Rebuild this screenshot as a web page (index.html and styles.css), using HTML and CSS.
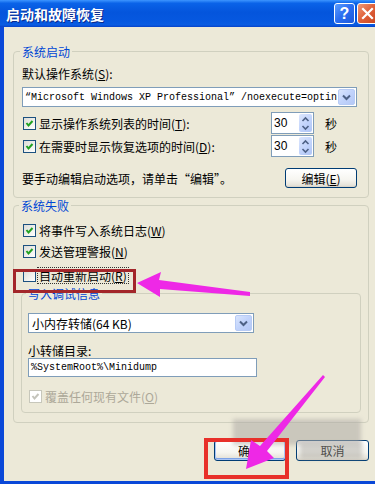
FILE: index.html
```html
<!DOCTYPE html>
<html lang="zh-CN">
<head>
<meta charset="utf-8">
<title>启动和故障恢复</title>
<link rel="stylesheet" href="styles.css">
</head>
<body>
<div class="window">
  <div class="titlebar">
    <span class="title">启动和故障恢复</span>
    <div class="tb-buttons">
      <span class="tb-btn help">?</span>
      <span class="tb-btn close"><svg width="19" height="19" viewBox="0 0 19 19"><path d="M5 5 L14 14 M14 5 L5 14" stroke="#fff" stroke-width="2.2" stroke-linecap="square"/></svg></span>
    </div>
  </div>
  <div class="client">
    <fieldset class="group g1">
      <legend>系统启动</legend>
      <div class="label">默认操作系统(<u>S</u>):</div>
      <div class="combo combo-os">
        <span class="combo-text mono">“Microsoft Windows XP Professional” /noexecute=optin</span>
        <span class="combo-btn"><svg width="9" height="7" viewBox="0 0 9 7"><path d="M1 1.5 L4.5 5 L8 1.5" fill="none" stroke="#4D6185" stroke-width="2"/></svg></span>
      </div>
      <div class="spin-row">
        <span class="cb"><svg width="11" height="11" viewBox="0 0 11 11"><path d="M2.5 5 L4.5 7.5 L8.5 3" fill="none" stroke="#21A121" stroke-width="2"/></svg></span>
        <span class="cb-label">显示操作系统列表的时间(<u>T</u>):</span>
        <span class="spin"><span class="spin-val">30</span><span class="spin-btn"><svg width="13" height="19" viewBox="0 0 13 19"><path d="M3.5 7 L6.5 4 L9.5 7 M3.5 12 L6.5 15 L9.5 12" fill="none" stroke="#4D6185" stroke-width="1.6"/></svg></span></span>
        <span class="unit">秒</span>
      </div>
      <div class="spin-row second">
        <span class="cb"><svg width="11" height="11" viewBox="0 0 11 11"><path d="M2.5 5 L4.5 7.5 L8.5 3" fill="none" stroke="#21A121" stroke-width="2"/></svg></span>
        <span class="cb-label">在需要时显示恢复选项的时间(<u>D</u>):</span>
        <span class="spin"><span class="spin-val">30</span><span class="spin-btn"><svg width="13" height="19" viewBox="0 0 13 19"><path d="M3.5 7 L6.5 4 L9.5 7 M3.5 12 L6.5 15 L9.5 12" fill="none" stroke="#4D6185" stroke-width="1.6"/></svg></span></span>
        <span class="unit">秒</span>
      </div>
      <div class="edit-row">
        <span>要手动编辑启动选项，请单击“编辑”。</span>
        <button class="btn btn-edit" type="button">编辑(<u>E</u>)</button>
      </div>
    </fieldset>

    <fieldset class="group g2">
      <legend>系统失败</legend>
      <div class="cb-row first">
        <span class="cb"><svg width="11" height="11" viewBox="0 0 11 11"><path d="M2.5 5 L4.5 7.5 L8.5 3" fill="none" stroke="#21A121" stroke-width="2"/></svg></span>
        <span class="cb-label">将事件写入系统日志(<u>W</u>)</span>
      </div>
      <div class="cb-row">
        <span class="cb"><svg width="11" height="11" viewBox="0 0 11 11"><path d="M2.5 5 L4.5 7.5 L8.5 3" fill="none" stroke="#21A121" stroke-width="2"/></svg></span>
        <span class="cb-label">发送管理警报(<u>N</u>)</span>
      </div>
      <div class="cb-row restart">
        <span class="cb"></span>
        <span class="cb-label focus">自动重新启动(<u>R</u>)</span>
      </div>

      <fieldset class="group g3">
        <legend>写入调试信息</legend>
        <div class="combo combo-dump">
          <span class="combo-text">小内存转储(64 KB)</span>
          <span class="combo-btn"><svg width="9" height="7" viewBox="0 0 9 7"><path d="M1 1.5 L4.5 5 L8 1.5" fill="none" stroke="#4D6185" stroke-width="2"/></svg></span>
        </div>
        <div class="label dir-label">小转储目录:</div>
        <div class="textbox mono">%SystemRoot%\Minidump</div>
        <div class="cb-row disabled">
          <span class="cb"><svg width="11" height="11" viewBox="0 0 11 11"><path d="M2.5 5 L4.5 7.5 L8.5 3" fill="none" stroke="#C4C4BB" stroke-width="2"/></svg></span>
          <span class="cb-label">覆盖任何现有文件(<u>O</u>)</span>
        </div>
      </fieldset>
    </fieldset>

    <div class="dlg-buttons">
      <button class="btn btn-ok" type="button">确定</button>
      <button class="btn btn-cancel" type="button">取消</button>
    </div>
  </div>

  <div class="mark red-box-1"></div>
  <div class="mark blur-1"></div>
  <div class="mark blur-2"></div>
  <div class="mark red-box-2"></div>
  <svg class="arrows" width="375" height="484" viewBox="0 0 375 484">
    <polygon points="137,283 161,272 159,280 250,292 250,296 160,289 160,297" fill="#EE28E6"/>
    <polygon points="323,375 325,377 267,451 274,458 246,469 251,440 260,446" fill="#EE28E6"/>
  </svg>
</div>
</body>
</html>
```

FILE: styles.css
```css
* { box-sizing: border-box; }
html, body { margin: 0; padding: 0; }
body {
  width: 375px;
  height: 484px;
  overflow: hidden;
  background: #ECE9D8;
  font-family: "Noto Sans CJK SC", "Noto Sans", sans-serif;
  font-size: 12px;
  color: #000;
}
u { text-decoration: underline; text-underline-offset: 1px; }
.mono { font-family: "Liberation Mono", "DejaVu Sans Mono", monospace; font-size: 10px; }

.window {
  position: relative;
  width: 375px;
  height: 484px;
  overflow: hidden;
  display: flex;
  flex-direction: column;
  background: #ECE9D8;
}

/* title bar */
.titlebar {
  height: 27px;
  flex: none;
  display: flex;
  align-items: flex-start;
  justify-content: space-between;
  padding-left: 6px;
  background: linear-gradient(to bottom, #3D95FF 0%, #0A63E8 12%, #0455DC 45%, #0658E0 80%, #0A5CE2 92%, #0742C8 100%);
}
.title {
  color: #fff;
  font-weight: bold;
  font-size: 14px;
  line-height: 16px;
  margin-top: 6px;
  text-shadow: 1px 1px 0 #0B2A8A;
}
.tb-buttons {
  display: flex;
  gap: 2px;
  margin-top: 3px;
  margin-right: -3px;
}
.tb-btn {
  width: 21px;
  height: 21px;
  border: 1px solid #fff;
  border-radius: 3px;
  display: flex;
  align-items: center;
  justify-content: center;
}
.help {
  background: linear-gradient(135deg, #5C9DFF 0%, #2A6DF0 50%, #1E58DA 100%);
  color: #fff;
  font-family: "Liberation Sans", sans-serif;
  font-weight: bold;
  font-size: 16px;
  line-height: 19px;
}
.close {
  background: linear-gradient(135deg, #F09A78 0%, #DF5F38 50%, #C8451E 100%);
}

/* client area */
.client {
  flex: 1;
  border-left: 4px solid #0A48D8;
  border-bottom: 3px solid #0A48D8;
  padding: 17px 6px 0 9px;
}

fieldset.group {
  margin: 0;
  min-width: 0;
  border: 1px solid #D0D0BF;
  border-radius: 4px;
}
fieldset.group legend {
  padding: 0 2px;
  margin-left: -2px;
  color: #0046D5;
  line-height: 15px;
}
.g1 { padding: 0 11px 9px 8px; }
.g2 { margin-top: 6px; padding: 0 7px 9px 7px; }
.g3 { margin-top: 3px; padding: 0 6px 6px 6px; }

.label { line-height: 15px; margin-top: 7px; }
.dir-label { margin-top: 10px; }

.combo {
  height: 20px;
  background: #fff;
  border: 1px solid #7F9DB9;
  display: flex;
  align-items: center;
  justify-content: space-between;
  padding: 0 1px 0 2px;
}
.combo-os { margin-top: 6px; }
.combo-dump { margin-top: 12px; width: 226px; padding-left: 3px; }
.combo-text { white-space: nowrap; overflow: hidden; }
.combo-btn {
  width: 17px;
  height: 16px;
  flex: none;
  border: 1px solid #B7CBF5;
  border-radius: 2px;
  background: linear-gradient(135deg, #D9E5FD 0%, #C1D3FB 50%, #B4C8F6 100%);
  display: flex;
  align-items: center;
  justify-content: center;
}

.spin-row {
  height: 22px;
  margin-top: 5px;
  display: flex;
  align-items: center;
  padding-left: 1px;
}
.spin-row.second { margin-top: 1px; }
.cb {
  width: 13px;
  height: 13px;
  flex: none;
  border: 1px solid #1C5180;
  background: linear-gradient(135deg, #DCDCD7 0%, #F2F2EE 60%, #FFFFFF 100%);
  display: flex;
  align-items: center;
  justify-content: center;
}
.cb-label { margin-left: 3px; line-height: 15px; white-space: nowrap; }
.spin-row .cb-label { flex: 1; }
.spin {
  width: 43px;
  height: 22px;
  flex: none;
  border: 1px solid #7F9DB9;
  background: #fff;
  display: flex;
  align-items: center;
  justify-content: space-between;
  padding: 1px 1px 1px 2px;
}
.spin-val { font-family: "Liberation Sans", sans-serif; font-size: 12px; }
.spin-btn {
  width: 13px;
  height: 18px;
  border-radius: 2px;
  background: linear-gradient(135deg, #DCE6FD 0%, #C1D3FB 55%, #B0C5F5 100%);
  display: flex;
  align-items: center;
  justify-content: center;
  overflow: hidden;
}
.unit { width: 12px; margin-left: 11px; margin-right: 20px; }

.edit-row {
  height: 20px;
  margin-top: 11px;
  display: flex;
  align-items: center;
  justify-content: space-between;
}

.btn {
  font-family: inherit;
  font-size: 12px;
  color: #000;
  height: 20px;
  border: 1px solid #003C74;
  border-radius: 3px;
  background: linear-gradient(to bottom, #FFFFFF 0%, #F6F5F0 60%, #E6E3DA 90%, #D6D0C5 100%);
  padding: 0;
}
.btn-edit { width: 72px; }

.cb-row {
  height: 21px;
  display: flex;
  align-items: center;
  padding-left: 2px;
}
.cb-row.first { margin-top: 7px; }
.cb-row.restart { margin-top: 2px; height: 22px; }
.focus { outline: 1px dotted #333; outline-offset: 0; padding: 0 1px; margin-left: 2px; }

.textbox {
  width: 229px;
  height: 19px;
  border: 1px solid #7F9DB9;
  background: #fff;
  padding-left: 2px;
  line-height: 17px;
}
.cb-row.disabled { margin-top: 9px; height: 20px; padding-left: 1px; }
.cb-row.disabled .cb { border-color: #C7C7BB; background: #fff; }
.cb-row.disabled .cb-label { color: #ACA899; }

.dlg-buttons {
  margin-top: 17px;
  display: flex;
  justify-content: flex-end;
  gap: 10px;
}
.btn-ok, .btn-cancel { height: 21px; width: 72px; }
.btn-ok { box-shadow: inset 0 0 0 1px #A9C4F5, inset 0 -1px 0 1px #7DA2E6; }
.btn-cancel { width: 73px; }

/* annotation overlays */
.mark { position: absolute; pointer-events: none; }
.red-box-1 { left: 13px; top: 269px; width: 123px; height: 24px; border: 3px solid #A3262A; }
.red-box-2 { left: 204px; top: 438px; width: 85px; height: 41px; border: 4px solid #E8302A; }
.blur-1 { left: 233px; top: 419px; width: 128px; height: 26px; background: rgba(175, 172, 165, 0.55); filter: blur(2px); }
.blur-2 { left: 300px; top: 443px; width: 62px; height: 16px; background: rgba(165, 162, 156, 0.45); filter: blur(2px); }
.arrows { position: absolute; left: 0; top: 0; pointer-events: none; }
```
